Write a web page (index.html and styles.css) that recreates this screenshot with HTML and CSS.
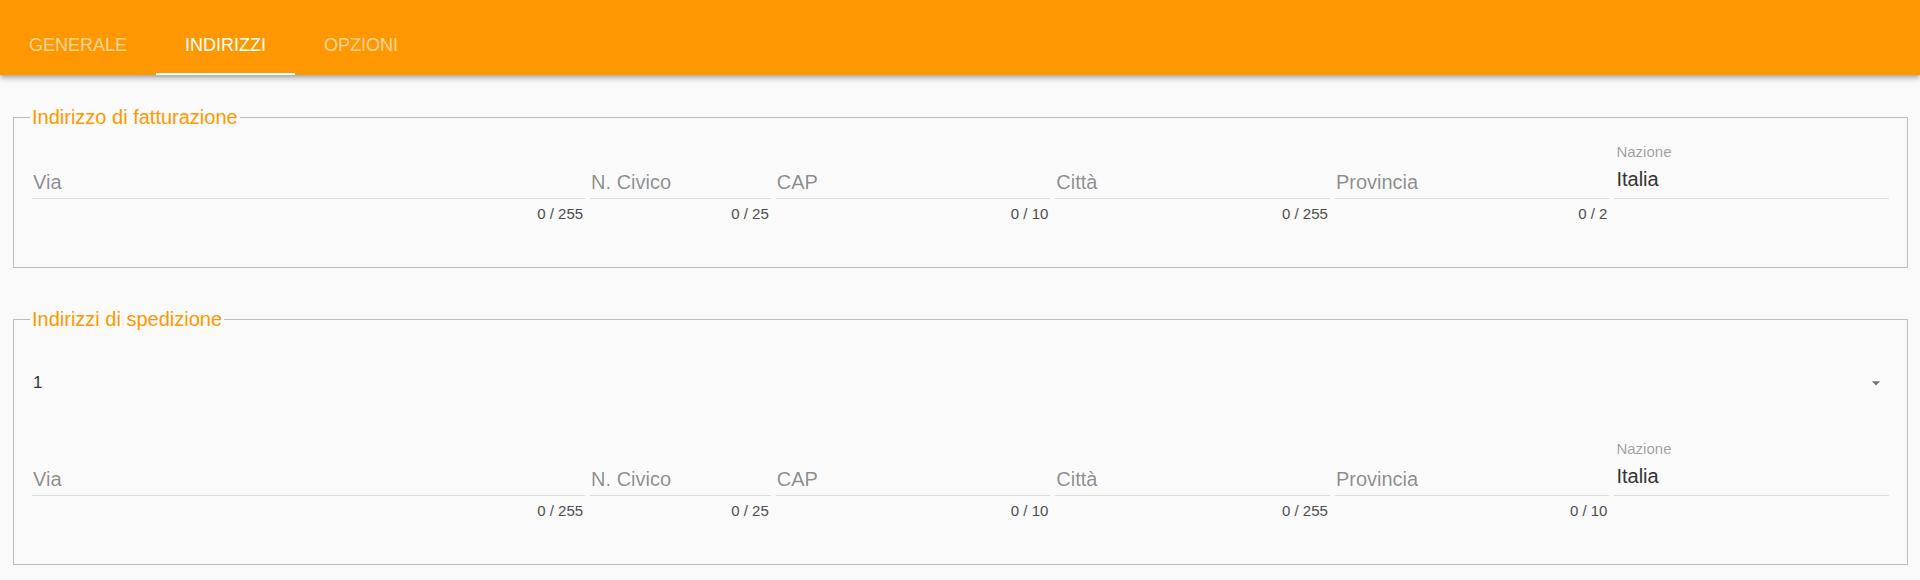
FILE: index.html
```html
<!DOCTYPE html>
<html lang="it">
<head>
  <meta charset="UTF-8" />
  <meta name="viewport" content="width=device-width, initial-scale=1.0"/>
  <title>Indirizzi</title>
  <link rel="stylesheet" href="styles.css">
</head>
<body>

  <!-- Tabs toolbar -->
  <header class="toolbar">
    <nav class="tabs">
      <a class="tab">Generale</a>
      <a class="tab active">Indirizzi</a>
      <a class="tab">Opzioni</a>
    </nav>
  </header>

  <main class="content">

    <!-- Billing address -->
    <fieldset class="group">
      <legend>Indirizzo di fatturazione</legend>
      <div class="row">
        <div class="field">
          <label class="field-label"></label>
          <div class="field-input"><span class="placeholder">Via</span></div>
          <div class="field-details"><span class="counter">0 / 255</span></div>
        </div>
        <div class="field">
          <label class="field-label"></label>
          <div class="field-input"><span class="placeholder">N. Civico</span></div>
          <div class="field-details"><span class="counter">0 / 25</span></div>
        </div>
        <div class="field">
          <label class="field-label"></label>
          <div class="field-input"><span class="placeholder">CAP</span></div>
          <div class="field-details"><span class="counter">0 / 10</span></div>
        </div>
        <div class="field">
          <label class="field-label"></label>
          <div class="field-input"><span class="placeholder">Città</span></div>
          <div class="field-details"><span class="counter">0 / 255</span></div>
        </div>
        <div class="field">
          <label class="field-label"></label>
          <div class="field-input"><span class="placeholder">Provincia</span></div>
          <div class="field-details"><span class="counter">0 / 2</span></div>
        </div>
        <div class="field">
          <label class="field-label">Nazione</label>
          <div class="field-input"><span class="value">Italia</span></div>
          <div class="field-details"></div>
        </div>
      </div>
    </fieldset>

    <!-- Shipping addresses -->
    <fieldset class="group">
      <legend>Indirizzi di spedizione</legend>
      <div class="select">
        <span class="select-value">1</span>
        <svg class="select-arrow" viewBox="0 0 24 24" width="20" height="20">
          <path d="M7 10l5 5 5-5z" fill="#757575"/>
        </svg>
      </div>
      <div class="row shipping-row">
        <div class="field">
          <label class="field-label"></label>
          <div class="field-input"><span class="placeholder">Via</span></div>
          <div class="field-details"><span class="counter">0 / 255</span></div>
        </div>
        <div class="field">
          <label class="field-label"></label>
          <div class="field-input"><span class="placeholder">N. Civico</span></div>
          <div class="field-details"><span class="counter">0 / 25</span></div>
        </div>
        <div class="field">
          <label class="field-label"></label>
          <div class="field-input"><span class="placeholder">CAP</span></div>
          <div class="field-details"><span class="counter">0 / 10</span></div>
        </div>
        <div class="field">
          <label class="field-label"></label>
          <div class="field-input"><span class="placeholder">Città</span></div>
          <div class="field-details"><span class="counter">0 / 255</span></div>
        </div>
        <div class="field">
          <label class="field-label"></label>
          <div class="field-input"><span class="placeholder">Provincia</span></div>
          <div class="field-details"><span class="counter">0 / 10</span></div>
        </div>
        <div class="field">
          <label class="field-label">Nazione</label>
          <div class="field-input"><span class="value">Italia</span></div>
          <div class="field-details"></div>
        </div>
      </div>
    </fieldset>

  </main>

</body>
</html>
```

FILE: styles.css
```css
* {
  margin: 0;
  padding: 0;
  box-sizing: border-box;
  font-family: 'Liberation Sans', Arial, Helvetica, sans-serif;
}
body {
  background-color: #fafafa;
  height: 580px;
  overflow: hidden;
}
.toolbar {
  background-color: #ff9800;
  height: 75px;
  padding-top: 18px;
  box-shadow: 0 2px 4px -1px rgba(0, 0, 0, 0.2), 0 4px 5px 0 rgba(0, 0, 0, 0.14), 0 1px 10px 0 rgba(0, 0, 0, 0.12);
  position: relative;
  z-index: 1;
}
.tabs {
  display: flex;
  height: 57px;
}
.tab {
  display: flex;
  align-items: center;
  padding: 0 29px;
  font-size: 18px;
  text-transform: uppercase;
  color: rgba(255, 255, 255, 0.62);
  border-bottom: 2px solid transparent;
  cursor: pointer;
}
.tab.active {
  color: #fff;
  border-bottom-color: #fff;
}
.content {
  padding: 30px 12px 0 13px;
}
.group {
  border: 1px solid #bdbdbd;
  padding: 0 18px 44px;
  margin: 0;
}
.group + .group {
  margin-top: 39px;
}
legend {
  color: #ff9800;
  font-size: 20px;
  line-height: 24px;
  padding: 0 2px;
  margin-left: -2px;
}
.row {
  display: grid;
  grid-template-columns: 554fr 181fr 275fr 275fr 275fr 275fr;
  column-gap: 5px;
  margin-top: 14px;
}
.shipping-row {
  margin-top: 41px;
}
.field-label {
  display: block;
  height: 18px;
  font-size: 15px;
  line-height: 18px;
  color: rgba(0, 0, 0, 0.38);
  padding-left: 2px;
  margin-bottom: 5px;
}
.field-input {
  height: 33px;
  border-bottom: 1px solid #dcdcdc;
  font-size: 20px;
}
.placeholder {
  display: block;
  line-height: 32px;
  color: rgba(0, 0, 0, 0.45);
  padding-left: 1px;
}
.value {
  display: block;
  line-height: 26px;
  padding-left: 2px;
  color: #333;
}
.field-details {
  height: 18px;
  margin-top: 6px;
  text-align: right;
  padding-right: 2px;
}
.counter {
  font-size: 15px;
  line-height: 18px;
  color: #4d4d4d;
}
.select {
  display: flex;
  align-items: center;
  justify-content: space-between;
  height: 32px;
  margin-top: 36px;
  padding-right: 3px;
}
.select-value {
  font-size: 17px;
  color: #333;
  padding-left: 1px;
}
```
